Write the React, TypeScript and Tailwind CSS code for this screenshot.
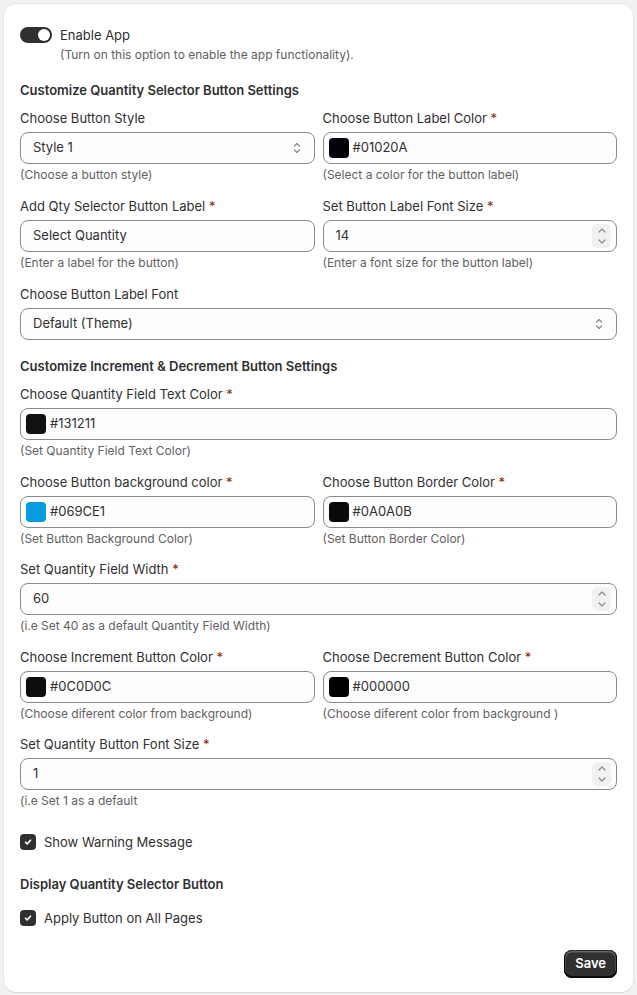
import { ReactNode } from 'react'

function Chevrons({ tall }: { tall?: boolean }) {
  return (
    <svg width="10" height={tall ? 20 : 14} viewBox={tall ? '0 0 10 20' : '0 0 10 14'} fill="none" stroke="#8a8a8a" strokeWidth="1.2" strokeLinecap="round" strokeLinejoin="round">
      {tall ? (
        <>
          <path d="M2 6 5 3 8 6" />
          <path d="M2 14 5 17 8 14" />
        </>
      ) : (
        <>
          <path d="M2.5 5 5 2.5 7.5 5" />
          <path d="M2.5 9 5 11.5 7.5 9" />
        </>
      )}
    </svg>
  )
}

function Label({ children, required }: { children: ReactNode; required?: boolean }) {
  return (
    <div className="text-[13px] leading-5 text-[#303030] mb-1">
      {children}
      {required && <span className="text-[#8e1f0b]"> *</span>}
    </div>
  )
}

function Help({ children }: { children: ReactNode }) {
  return <div className="text-[12px] leading-4 text-[#616161] mt-[3px]">{children}</div>
}

const boxCls =
  'h-8 rounded-lg border border-[#8a8a8a] bg-[#fdfdfd] flex items-center text-[13px] text-[#303030]'

function SelectField({ label, value, help }: { label: string; value: string; help?: string }) {
  return (
    <div>
      <Label>{label}</Label>
      <div className={`${boxCls} pl-3 pr-[12px] justify-between`}>
        <span>{value}</span>
        <Chevrons />
      </div>
      {help && <Help>{help}</Help>}
    </div>
  )
}

function TextField({ label, value, help }: { label: string; value: string; help: string }) {
  return (
    <div>
      <Label required>{label}</Label>
      <div className={`${boxCls} px-3`}>{value}</div>
      <Help>{help}</Help>
    </div>
  )
}

function NumberField({ label, value, help }: { label: string; value: string; help: string }) {
  return (
    <div>
      <Label required>{label}</Label>
      <div className={`${boxCls} pl-3 pr-[5px] justify-between`}>
        <span>{value}</span>
        <div className="w-[19px] h-6 rounded-[5px] bg-[#f1f1f1] flex items-center justify-center">
          <Chevrons tall />
        </div>
      </div>
      <Help>{help}</Help>
    </div>
  )
}

function ColorField({ label, color, help }: { label: string; color: string; help: string }) {
  return (
    <div>
      <Label required>{label}</Label>
      <div className={`${boxCls} pl-[5px] gap-[4px]`}>
        <span className="w-5 h-5 rounded-[4px]" style={{ backgroundColor: color }} />
        <span>{color}</span>
      </div>
      <Help>{help}</Help>
    </div>
  )
}

function Checkbox({ label }: { label: string }) {
  return (
    <label className="flex items-center gap-2 text-[13px] leading-5 text-[#303030]">
      <span className="w-4 h-4 rounded-[4px] bg-[#303030] flex items-center justify-center">
        <svg width="10" height="10" viewBox="0 0 10 10" fill="none" stroke="white" strokeWidth="1.6" strokeLinecap="round" strokeLinejoin="round">
          <path d="M2.5 5.2 4.2 6.9 7.5 3.2" />
        </svg>
      </span>
      {label}
    </label>
  )
}

function Heading({ children }: { children: ReactNode }) {
  return <h2 className="text-[13px] leading-5 font-semibold text-[#303030]">{children}</h2>
}

export default function App() {
  return (
    <div className="min-h-screen bg-[#f1f1f1] p-1 font-['Inter',sans-serif]">
      <div className="bg-white rounded-xl shadow-[0_1px_0_rgba(0,0,0,0.07),0_0_0_1px_rgba(0,0,0,0.04)] px-4 pt-[21px] pb-[14px]">
        {/* App toggle */}
        <div className="flex items-center gap-2">
          <span className="w-8 h-4 rounded-full bg-[#303030] flex items-center justify-end px-[2px]">
            <span className="w-3 h-3 rounded-full bg-white" />
          </span>
          <span className="text-[13px] leading-5 text-[#303030]">Enable App</span>
        </div>
        <p className="ml-10 text-[12px] leading-4 text-[#616161] mt-[2px]">
          (Turn on this option to enable the app functionality).
        </p>

        <div className="mt-[17px]">
          <Heading>Customize Quantity Selector Button Settings</Heading>
        </div>

        <div className="mt-2 grid grid-cols-2 gap-x-2 gap-y-[13px]">
          <SelectField label="Choose Button Style" value="Style 1" help="(Choose a button style)" />
          <ColorField label="Choose Button Label Color" color="#01020A" help="(Select a color for the button label)" />
          <TextField label="Add Qty Selector Button Label" value="Select Quantity" help="(Enter a label for the button)" />
          <NumberField label="Set Button Label Font Size" value="14" help="(Enter a font size for the button label)" />
          <div className="col-span-2">
            <SelectField label="Choose Button Label Font" value="Default (Theme)" />
          </div>
        </div>

        <div className="mt-4">
          <Heading>Customize Increment &amp; Decrement Button Settings</Heading>
        </div>

        <div className="mt-2 grid grid-cols-2 gap-x-2 gap-y-[12.5px]">
          <div className="col-span-2">
            <ColorField label="Choose Quantity Field Text Color" color="#131211" help="(Set Quantity Field Text Color)" />
          </div>
          <ColorField label="Choose Button background color" color="#069CE1" help="(Set Button Background Color)" />
          <ColorField label="Choose Button Border Color" color="#0A0A0B" help="(Set Button Border Color)" />
          <div className="col-span-2">
            <NumberField label="Set Quantity Field Width" value="60" help="(i.e Set 40 as a default Quantity Field Width)" />
          </div>
          <ColorField label="Choose Increment Button Color" color="#0C0D0C" help="(Choose diferent color from background)" />
          <ColorField label="Choose Decrement Button Color" color="#000000" help="(Choose diferent color from background )" />
          <div className="col-span-2">
            <NumberField label="Set Quantity Button Font Size" value="1" help="(i.e Set 1 as a default" />
          </div>
        </div>

        <div className="mt-[23px]">
          <Checkbox label="Show Warning Message" />
        </div>

        <div className="mt-[22px]">
          <Heading>Display Quantity Selector Button</Heading>
        </div>

        <div className="mt-[14px]">
          <Checkbox label="Apply Button on All Pages" />
        </div>

        <div className="mt-[22px] flex justify-end">
          <button className="h-7 px-[11px] rounded-lg bg-[#303030] text-white text-[13px] font-semibold shadow-[inset_0_-1px_0_1px_rgba(0,0,0,0.8),inset_0_0_0_1px_#303030,inset_0_1px_0_1.5px_rgba(255,255,255,0.25)]">
            Save
          </button>
        </div>
      </div>
    </div>
  )
}
